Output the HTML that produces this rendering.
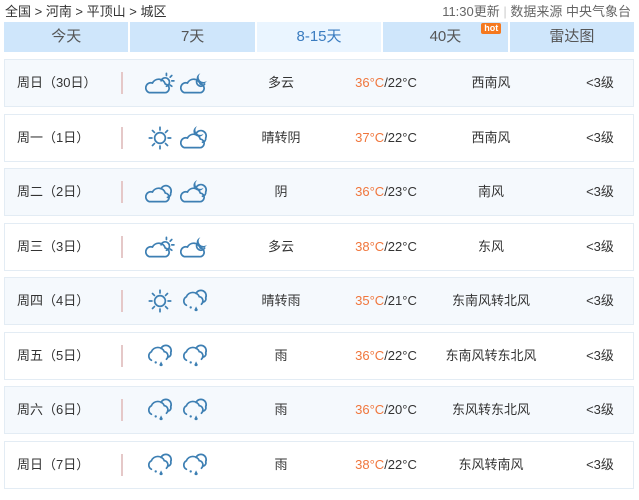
<!DOCTYPE html>
<html><head><meta charset="utf-8"><style>
*{margin:0;padding:0;box-sizing:border-box}
body{width:639px;height:500px;background:#fff;font-family:"Liberation Sans","Noto Sans CJK SC",sans-serif;color:#333;position:relative;overflow:hidden}
.crumb{position:absolute;left:5px;top:1px;font-size:13px;color:#333}
.src{position:absolute;right:8px;top:1px;font-size:13px;color:#666}
.tabs{position:absolute;left:4px;top:22px;width:630px;height:30px;display:flex;gap:2px}
.tab{flex:1;background:#cfe6fb;text-align:center;line-height:30px;font-size:15px;color:#555;position:relative}
.tab.on{background:#eaf5ff;color:#3a7cc0}
.hot{position:absolute;left:98px;top:1px;background:#f5781e;color:#fff;font-size:9px;line-height:11px;padding:0 3px;border-radius:2px;font-weight:bold}
.row{position:absolute;left:4px;width:630px;height:48px;border:1px solid #e3ecf4;font-size:13px}
.row.l{background:#f5f9fd}
.row div{position:absolute;top:0;line-height:46px;white-space:nowrap}
.d{left:12px}
.bar{left:116px;top:12px!important;width:2px;height:22px;background:#e5c8c8}
.w{left:236px;width:80px;text-align:center}
.t{left:330px;width:102px;text-align:center}
.t span{color:#f0763c}
.wi{left:420px;width:132px;text-align:center}
.lv{left:560px;width:70px;text-align:center}
svg.ic{position:absolute;top:10px}
</style></head><body>
<svg width="0" height="0" style="position:absolute">
<defs>
<symbol id="pc" viewBox="0 0 28 24"><g fill="none" stroke="#3d7fb3" stroke-width="1.6" stroke-linecap="round"><path d="M4 21 H18 a4 4 0 0 0 1-8 a6.5 6.5 0 0 0-12-1 a4.5 4.5 0 0 0-3 9z"/><path d="M15 10 a4 4 0 1 1 5 5"/><path d="M20 3v2M27 10h-2M25 5l-1.5 1.5M25 15l-1.5-1"/></g></symbol>
<symbol id="pn" viewBox="0 0 28 24"><g fill="none" stroke="#3d7fb3" stroke-width="1.6" stroke-linecap="round"><path d="M4 21 H18 a4 4 0 0 0 1-8 a6.5 6.5 0 0 0-12-1 a4.5 4.5 0 0 0-3 9z"/><path d="M16 9 a4 4 0 0 0 7 4"/></g><path d="M19 3 a5 5 0 1 0 6 7 a4 4 0 0 1-6-7z" fill="#3d7fb3"/></symbol>
<symbol id="nf" viewBox="0 0 28 24"><g fill="none" stroke="#3d7fb3" stroke-width="1.6" stroke-linecap="round"><path d="M4 21 H18 a4 4 0 0 0 1-8 a6.5 6.5 0 0 0-12-1 a4.5 4.5 0 0 0-3 9z"/><path d="M15 8 a4.5 4.5 0 0 1 9 4 a3.5 3.5 0 0 1-3 4"/></g><path d="M16 1 a5 5 0 1 0 6 7 a4 4 0 0 1-6-7z" fill="#3d7fb3"/></symbol>
<symbol id="cc" viewBox="0 0 28 24"><g fill="none" stroke="#3d7fb3" stroke-width="1.6" stroke-linecap="round"><path d="M4 21 H18 a4 4 0 0 0 1-8 a6.5 6.5 0 0 0-12-1 a4.5 4.5 0 0 0-3 9z"/><path d="M15 9 a4.5 4.5 0 0 1 9 4 a3.5 3.5 0 0 1-3 4"/></g></symbol>
<symbol id="sun" viewBox="0 0 28 24"><g fill="none" stroke="#3d7fb3" stroke-width="1.6" stroke-linecap="round"><circle cx="14" cy="12" r="5"/><path d="M14 2v2.5M14 19.5V22M4 12h2.5M21.5 12H24M7 5l1.8 1.8M19.2 17.2L21 19M21 5l-1.8 1.8M8.8 17.2L7 19"/></g></symbol>
<symbol id="rn" viewBox="0 0 28 24"><g fill="none" stroke="#3d7fb3" stroke-width="1.6" stroke-linecap="round"><path d="M6 16 a4.5 4.5 0 0 1 0-8 a6.5 6.5 0 0 1 12 0 a4 4 0 0 1 2 7"/><path d="M15 5 a4.5 4.5 0 0 1 9 4 a3 3 0 0 1-3 4"/></g><circle cx="10" cy="18" r="1.1" fill="#3d7fb3"/><path d="M15 17l-1.5 3a1.5 1.5 0 0 0 3 0z" fill="#3d7fb3"/></symbol>
</defs></svg>
<div class="crumb">全国 &gt; 河南 &gt; 平顶山 &gt; 城区</div>
<div class="src">11:30更新 <span style="color:#ccc">|</span> 数据来源 中央气象台</div>
<div class="tabs"><div class="tab">今天</div><div class="tab">7天</div><div class="tab on">8-15天</div><div class="tab">40天<span class="hot">hot</span></div><div class="tab">雷达图</div></div>

<div class="row l" style="top:59px"><div class="d">周日（30日）</div><div class="bar"></div><svg class="ic" style="left:140px" width="30" height="26"><use href="#pc"/></svg><svg class="ic" style="left:175px" width="30" height="26"><use href="#pn"/></svg><div class="w">多云</div><div class="t"><span>36°C</span>/22°C</div><div class="wi">西南风</div><div class="lv">&lt;3级</div></div>
<div class="row" style="top:114px"><div class="d">周一（1日）</div><div class="bar"></div><svg class="ic" style="left:140px" width="30" height="26"><use href="#sun"/></svg><svg class="ic" style="left:175px" width="30" height="26"><use href="#nf"/></svg><div class="w">晴转阴</div><div class="t"><span>37°C</span>/22°C</div><div class="wi">西南风</div><div class="lv">&lt;3级</div></div>
<div class="row l" style="top:168px"><div class="d">周二（2日）</div><div class="bar"></div><svg class="ic" style="left:140px" width="30" height="26"><use href="#cc"/></svg><svg class="ic" style="left:175px" width="30" height="26"><use href="#nf"/></svg><div class="w">阴</div><div class="t"><span>36°C</span>/23°C</div><div class="wi">南风</div><div class="lv">&lt;3级</div></div>
<div class="row" style="top:223px"><div class="d">周三（3日）</div><div class="bar"></div><svg class="ic" style="left:140px" width="30" height="26"><use href="#pc"/></svg><svg class="ic" style="left:175px" width="30" height="26"><use href="#pn"/></svg><div class="w">多云</div><div class="t"><span>38°C</span>/22°C</div><div class="wi">东风</div><div class="lv">&lt;3级</div></div>
<div class="row l" style="top:277px"><div class="d">周四（4日）</div><div class="bar"></div><svg class="ic" style="left:140px" width="30" height="26"><use href="#sun"/></svg><svg class="ic" style="left:175px" width="30" height="26"><use href="#rn"/></svg><div class="w">晴转雨</div><div class="t"><span>35°C</span>/21°C</div><div class="wi">东南风转北风</div><div class="lv">&lt;3级</div></div>
<div class="row" style="top:332px"><div class="d">周五（5日）</div><div class="bar"></div><svg class="ic" style="left:140px" width="30" height="26"><use href="#rn"/></svg><svg class="ic" style="left:175px" width="30" height="26"><use href="#rn"/></svg><div class="w">雨</div><div class="t"><span>36°C</span>/22°C</div><div class="wi">东南风转东北风</div><div class="lv">&lt;3级</div></div>
<div class="row l" style="top:386px"><div class="d">周六（6日）</div><div class="bar"></div><svg class="ic" style="left:140px" width="30" height="26"><use href="#rn"/></svg><svg class="ic" style="left:175px" width="30" height="26"><use href="#rn"/></svg><div class="w">雨</div><div class="t"><span>36°C</span>/20°C</div><div class="wi">东风转东北风</div><div class="lv">&lt;3级</div></div>
<div class="row" style="top:441px"><div class="d">周日（7日）</div><div class="bar"></div><svg class="ic" style="left:140px" width="30" height="26"><use href="#rn"/></svg><svg class="ic" style="left:175px" width="30" height="26"><use href="#rn"/></svg><div class="w">雨</div><div class="t"><span>38°C</span>/22°C</div><div class="wi">东风转南风</div><div class="lv">&lt;3级</div></div>
</body></html>
